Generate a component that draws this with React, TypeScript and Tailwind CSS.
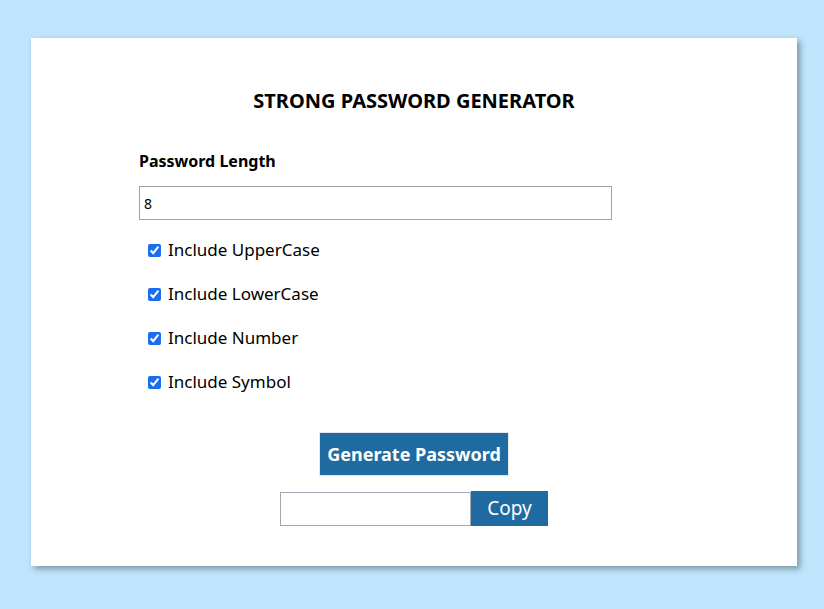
import { useState } from "react";

const options = ["Include UpperCase", "Include LowerCase", "Include Number", "Include Symbol"];

const App = () => {
  const [length, setLength] = useState("8");
  const [checked, setChecked] = useState([true, true, true, true]);

  return (
    <div className="min-h-[609px] bg-[#bee5fc] pt-[38px] font-['Noto_Sans',sans-serif] text-black">
      <div className="ml-[31px] h-[528px] w-[766px] overflow-hidden bg-white shadow-[3px_3px_6px_rgba(0,0,0,0.35)]">
        <h1 className="pt-[50px] text-center text-[20px] font-bold leading-[26px]">STRONG PASSWORD GENERATOR</h1>

        <div className="ml-[108px] mt-[35px] w-[473px]">
          <label className="block text-[16px] font-bold leading-[24px]">Password Length</label>
          <input
            type="text"
            value={length}
            onChange={(e) => setLength(e.target.value)}
            className="mt-[13px] block h-[34px] w-[473px] border border-[#9ca3af] px-[4px] text-[14px] outline-none"
          />
          <div className="mt-[17px] flex flex-col gap-[18px] pl-[9px]">
            {options.map((opt, i) => (
              <label key={opt} className="flex h-[26px] items-center gap-[7px] text-[17px] leading-[26px]">
                <input
                  type="checkbox"
                  checked={checked[i]}
                  onChange={() => setChecked(checked.map((c, j) => (j === i ? !c : c)))}
                  className="m-0 h-[13px] w-[13px] accent-[#1a6cf0]"
                />
                {opt}
              </label>
            ))}
          </div>
        </div>

        <div className="mt-[37px] flex flex-col items-center">
          <button className="h-[44px] w-[190px] border border-[#e5e7eb] bg-[#1f6aa0] text-[18px] font-bold text-white">
            Generate Password
          </button>
          <div className="mt-[15px] flex items-center">
            <input type="text" readOnly className="h-[34px] w-[191px] border border-[#a3a8b4] outline-none" />
            <button className="h-[35px] w-[77px] bg-[#1f6aa0] text-[19px] text-white">Copy</button>
          </div>
        </div>
      </div>
    </div>
  );
};

export default App;
